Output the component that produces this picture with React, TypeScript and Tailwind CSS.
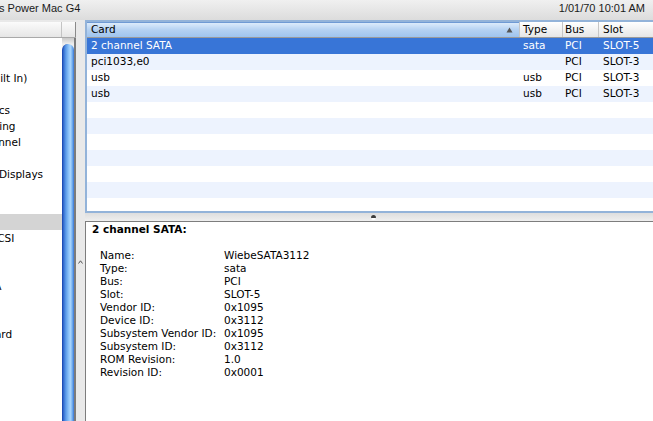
import React from 'react';

const sidebar = [
  { t: 'Hardware', h: true },
  { t: 'ATA' },
  { t: 'Audio (Built In)' },
  { t: 'Bluetooth' },
  { t: 'Diagnostics' },
  { t: 'Disc Burning' },
  { t: 'Fibre Channel' },
  { t: 'FireWire' },
  { t: 'Graphics/Displays' },
  { t: 'Memory' },
  { t: 'PC Cards' },
  { t: 'PCI Cards', sel: true },
  { t: 'Parallel SCSI' },
  { t: 'Power' },
  { t: 'Printers' },
  { t: 'Serial-ATA' },
  { t: 'USB' },
  { t: 'Network', h: true },
  { t: 'AirPort Card' },
  { t: 'Firewall' },
  { t: 'Locations' },
  { t: 'Modems' },
  { t: 'Volumes' },
  { t: 'Software', h: true },
];

const cards = [
  { card: '2 channel SATA', type: 'sata', bus: 'PCI', slot: 'SLOT-5' },
  { card: 'pci1033,e0', type: '', bus: 'PCI', slot: 'SLOT-3' },
  { card: 'usb', type: 'usb', bus: 'PCI', slot: 'SLOT-3' },
  { card: 'usb', type: 'usb', bus: 'PCI', slot: 'SLOT-3' },
];

const details = [
  ['Name:', 'WiebeSATA3112'],
  ['Type:', 'sata'],
  ['Bus:', 'PCI'],
  ['Slot:', 'SLOT-5'],
  ['Vendor ID:', '0x1095'],
  ['Device ID:', '0x3112'],
  ['Subsystem Vendor ID:', '0x1095'],
  ['Subsystem ID:', '0x3112'],
  ['ROM Revision:', '1.0'],
  ['Revision ID:', '0x0001'],
];

function TitleBar() {
  return (
    <div className="h-[20px] flex items-center justify-between bg-gradient-to-b from-[#f0f0f0] to-[#dcdcdc] font-['Liberation_Sans',sans-serif] text-[11px] text-[#1a1a1a] pb-[3px]">
      <span className="-ml-[1px]">s Power Mac G4</span>
      <span className="pr-[8px]">1/01/70 10:01 AM</span>
    </div>
  );
}

function Sidebar() {
  return (
    <div className="w-[76px] flex flex-col pt-[2px]">
      <div className="h-[16px] flex border-b border-[#a9a9a9] bg-gradient-to-b from-[#fbfbfb] to-[#e6e6e6]">
        <div className="w-[62px] border-r border-[#c4c4c4]" />
        <div className="flex-1 border-r border-[#8a8a8a]" />
      </div>
      <div className="flex-1 flex min-h-0">
        <div className="w-[62px] bg-white overflow-hidden">
          {sidebar.map((s, i) => (
            <div
              key={i}
              className={`h-[16px] flex items-center whitespace-nowrap pt-[2px] ${s.sel ? 'bg-[#d4d4d4]' : ''}`}
            >
              <span className={s.h ? 'ml-[-66px] font-bold' : 'ml-[-51px]'}>{s.t}</span>
            </div>
          ))}
        </div>
        <div className="w-[14px] flex flex-col bg-[#eeeeee] border-r-2 border-[#7c7c7c]">
          <div className="h-[6px] bg-gradient-to-b from-[#c9c9c9] to-[#eeeeee]" />
          <div className="flex-1 rounded-t-[7px] border-l border-[#1e4eb5] bg-[linear-gradient(to_right,#2a5fc8_0%,#5a9ae8_25%,#94c8fa_55%,#a9d4fb_70%,#5c9de9_90%,#3d72d2_100%)]" />
        </div>
      </div>
    </div>
  );
}

function Table() {
  const rows = Array.from({ length: 11 }, (_, i) => cards[i]);
  return (
    <div className="h-[193px] border-2 border-r-0 border-[#93b3d9] bg-white overflow-hidden flex flex-col">
      <div className="h-[16px] flex shrink-0 border-b border-[#9a9a9a]">
        <div className="w-[432px] flex items-center justify-between pl-[4px] pr-[6px] border-t border-[#6f9ad4] bg-gradient-to-b from-[#dcebfb] via-[#b4d1f2] to-[#9fc4ee]">
          <span>Card</span>
          <svg width="7" height="6" viewBox="0 0 7 6">
            <path d="M3.5 0.5 L6.5 5.5 L0.5 5.5 Z" fill="#555" />
          </svg>
        </div>
        <div className="w-[43px] flex items-center pl-[3px] border-l border-[#c6c6c6] bg-gradient-to-b from-[#ffffff] to-[#e6e6e6]">Type</div>
        <div className="w-[36px] flex items-center pl-[2px] border-l border-[#c6c6c6] bg-gradient-to-b from-[#ffffff] to-[#e6e6e6]">Bus</div>
        <div className="flex-1 flex items-center pl-[4px] border-l border-[#c6c6c6] bg-gradient-to-b from-[#ffffff] to-[#e6e6e6]">Slot</div>
      </div>
      {rows.map((r, i) => (
        <div
          key={i}
          className={`h-[16px] shrink-0 flex items-center ${
            i === 0 ? 'bg-[#3875d7] text-white' : i % 2 === 1 ? 'bg-[#edf3fe]' : 'bg-white'
          }`}
        >
          {r && (
            <>
              <div className="w-[432px] pl-[4px]">{r.card}</div>
              <div className="w-[43px] pl-[4px]">{r.type}</div>
              <div className="w-[36px] pl-[3px]">{r.bus}</div>
              <div className="flex-1 pl-[5px]">{r.slot}</div>
            </>
          )}
        </div>
      ))}
    </div>
  );
}

function Splitter() {
  return (
    <div className="h-[8px] flex items-center justify-center bg-gradient-to-b from-[#dedede] to-[#efefef]">
      <div className="w-[5px] h-[5px] rounded-full bg-[#3c3c3c] border-b-2 border-white ml-[8px]" />
    </div>
  );
}

function Details() {
  return (
    <div className="flex-1 bg-white border-t border-l border-[#7d7d7d] leading-[13px] pl-[6px]">
      <div className="font-bold pt-[1px]">2 channel SATA:</div>
      <div className="mt-[13px] pl-[8px] grid grid-cols-[124px_1fr]">
        {details.map(([k, v]) => (
          <React.Fragment key={k}>
            <div className="whitespace-nowrap">{k}</div>
            <div>{v}</div>
          </React.Fragment>
        ))}
      </div>
    </div>
  );
}

export default function App() {
  return (
    <div className="w-[653px] h-[421px] overflow-hidden flex flex-col bg-[#e9e9e9] text-black font-['DejaVu_Sans',sans-serif] text-[10.5px]">
      <TitleBar />
      <div className="flex-1 flex min-h-0">
        <Sidebar />
        <div className="w-[9px] pt-[240px] flex justify-center">
          <svg width="5" height="4" viewBox="0 0 5 4">
            <path d="M0.5 3.5 L2.5 0.8 L4.5 3.5" stroke="#555" strokeWidth="1" fill="none" />
          </svg>
        </div>
        <div className="flex-1 flex flex-col min-w-0">
          <Table />
          <Splitter />
          <Details />
        </div>
      </div>
    </div>
  );
}
